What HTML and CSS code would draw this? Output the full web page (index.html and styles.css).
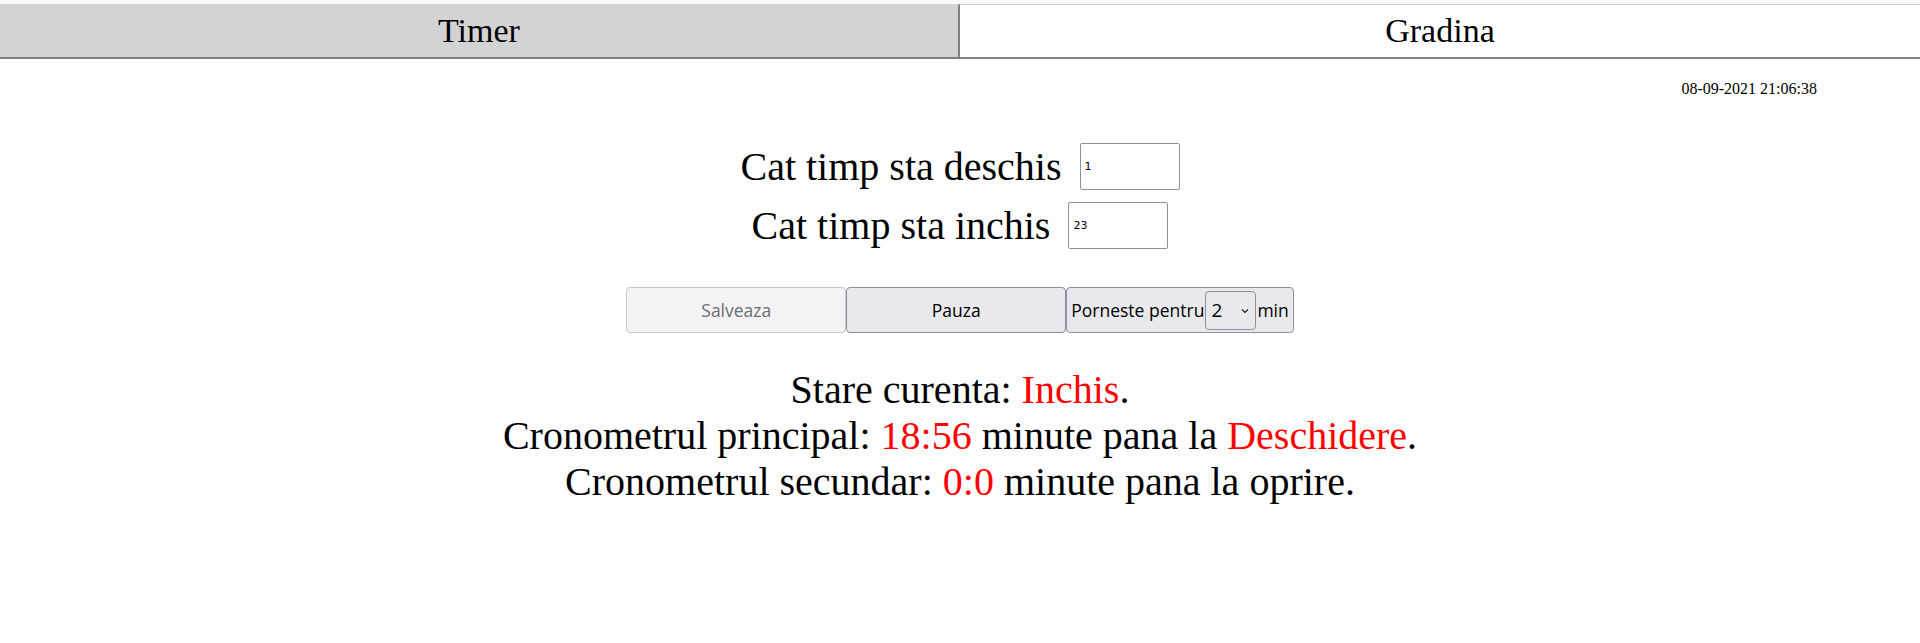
FILE: index.html
```html
<!DOCTYPE html>
<html lang="ro">
<head>
<meta charset="utf-8">
<title>Gradina</title>
<link rel="stylesheet" href="styles.css">
</head>
<body>
<div class="topstrip"></div>
<nav class="tabs">
  <button class="tab tab-active">Timer</button>
  <button class="tab">Gradina</button>
</nav>
<div class="datetime">08-09-2021 21:06:38</div>
<main class="content">
  <div class="field-row">
    <span class="field-label">Cat timp sta deschis</span>
    <input class="field-input" type="text" value="1">
  </div>
  <div class="field-row">
    <span class="field-label">Cat timp sta inchis</span>
    <input class="field-input" type="text" value="23">
  </div>
  <div class="actions">
    <button class="btn" disabled>Salveaza</button>
    <button class="btn">Pauza</button>
    <button class="btn btn-start">Porneste pentru<span class="select-wrap"><select class="minutes"><option>2</option></select><svg class="chev" width="8" height="6" viewBox="0 0 8 6"><path d="M1 1.5 L4 4.5 L7 1.5" fill="none" stroke="#222" stroke-width="1.2"/></svg></span>min</button>
  </div>
  <div class="status">
    <div>Stare curenta: <span class="red">Inchis</span>.</div>
    <div>Cronometrul principal: <span class="red">18:56</span> minute pana la <span class="red">Deschidere</span>.</div>
    <div>Cronometrul secundar: <span class="red">0:0</span> minute pana la oprire.</div>
  </div>
</main>
</body>
</html>
```
FILE: styles.css
```css
* { box-sizing: border-box; }
html, body { margin: 0; padding: 0; background: #fff; }
body { font-family: "Liberation Serif", "Times New Roman", serif; color: #000; }

.topstrip { height: 4px; background: #f9f9fb; }

.tabs { display: flex; border-bottom: 2px solid #808080; }
.tab {
  flex: 1 1 50%;
  height: 53px;
  margin: 0;
  padding: 0;
  border: none;
  border-top: 1px solid #c8c8c8;
  background: #fff;
  font-family: "Liberation Serif", "Times New Roman", serif;
  font-size: 34px;
  color: #000;
}
.tab-active { background: #d3d3d3; border-top-color: #d3d3d3; border-right: 2px solid #808080; }

.datetime {
  margin-top: 21px;
  padding-right: 103px;
  text-align: right;
  font-size: 16px;
  line-height: 18px;
}

.content { display: flex; flex-direction: column; align-items: center; }

.field-row { display: flex; align-items: center; gap: 18px; font-size: 40px; }
.field-row:first-child { margin-top: 45px; }
.field-row + .field-row { margin-top: 12px; }
.field-label { line-height: 46px; }
.field-input {
  width: 100px;
  height: 47px;
  padding: 1px 4px;
  border: 1px solid #8f8f9d;
  border-radius: 2px;
  font-family: "DejaVu Sans", sans-serif;
  font-size: 11px;
  color: #000;
}

.actions { display: flex; margin-top: 38px; }
.btn {
  width: 220px;
  height: 46px;
  margin: 0;
  padding: 0 5px;
  border: 1px solid #8f8f9d;
  border-radius: 4px;
  background: #e9e9ed;
  font-family: "Open Sans", "Noto Sans", sans-serif;
  font-size: 17.5px;
  color: #000;
  display: flex;
  align-items: center;
  justify-content: center;
}
.btn:disabled { background: #f3f3f6; color: #6d6d6d; border-color: #c8c8cf; }
.btn-start { width: auto; padding: 0 4px; justify-content: flex-start; }

.select-wrap { position: relative; display: inline-block; margin: 0 1px; }
.minutes {
  appearance: none;
  -webkit-appearance: none;
  width: 51px;
  height: 39px;
  padding: 0 0 0 5px;
  border: 1px solid #8f8f9d;
  border-radius: 4px;
  background: #e9e9ed;
  font-family: "Open Sans", "Noto Sans", sans-serif;
  font-size: 19px;
  color: #000;
  display: block;
}
.chev { position: absolute; right: 7px; top: 17px; }

.status { margin-top: 34px; font-size: 40px; line-height: 46px; text-align: center; }
.red { color: #ff0000; }
```
